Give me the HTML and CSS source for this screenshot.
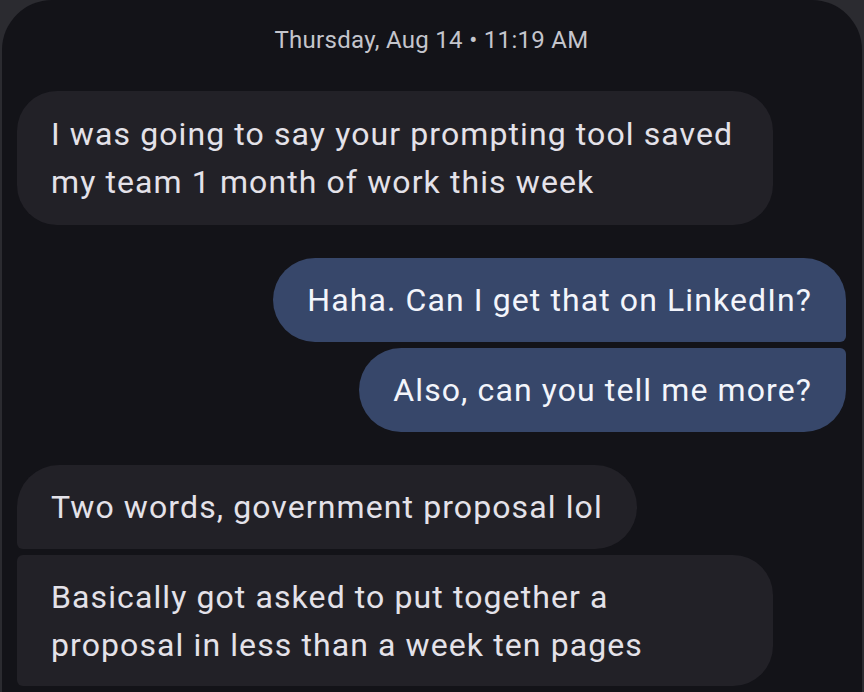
FILE: index.html
```html
<!DOCTYPE html>
<html lang="en">
<head>
<meta charset="utf-8">
<title>Messages</title>
<link rel="stylesheet" href="styles.css">
</head>
<body>
<div class="screen">
  <div class="timestamp">Thursday, Aug 14 • 11:19 AM</div>
  <div class="thread">
    <div class="group">
      <div class="bubble in multi">I was going to say your prompting tool saved my team 1 month of work this week</div>
    </div>
    <div class="group out-group">
      <div class="bubble out first">Haha. Can I get that on LinkedIn?</div>
      <div class="bubble out last">Also, can you tell me more?</div>
    </div>
    <div class="group">
      <div class="bubble in first">Two words, government proposal lol</div>
      <div class="bubble in mid multi">Basically got asked to put together a proposal in less than a week ten pages</div>
    </div>
  </div>
</div>
</body>
</html>
```

FILE: styles.css
```css
html, body {
  margin: 0;
  padding: 0;
  height: 100%;
}
body {
  background: #2b2b30;
  font-family: Roboto, "Noto Sans", sans-serif;
  overflow: hidden;
}
.screen {
  margin: 0 2px;
  height: 692px;
  background: #131318;
  border-radius: 50px 50px 0 0;
  box-sizing: border-box;
  padding: 26px 16px 0 15px;
  display: flex;
  flex-direction: column;
}
.timestamp {
  text-align: center;
  font-size: 24px;
  line-height: 28px;
  color: #c4c5cc;
  letter-spacing: 0.3px;
}
.thread {
  margin-top: 37px;
  display: flex;
  flex-direction: column;
  gap: 33px;
}
.group {
  display: flex;
  flex-direction: column;
  align-items: flex-start;
  gap: 6px;
}
.out-group {
  align-items: flex-end;
}
.bubble {
  box-sizing: border-box;
  max-width: 756px;
  padding: 18px 34px;
  font-size: 32px;
  line-height: 48px;
  letter-spacing: 1.1px;
  border-radius: 40px;
}
.multi {
  width: 756px;
  padding-top: 19px;
  padding-bottom: 19px;
}
.in {
  background: #222127;
  color: #e4e2e9;
}
.out {
  background: #37476a;
  color: #f3f5fb;
  border-radius: 42px;
}
.out.first {
  border-bottom-right-radius: 6px;
}
.out.last {
  border-top-right-radius: 6px;
}
.in.first {
  border-radius: 42px;
  border-bottom-left-radius: 6px;
}
.in.mid {
  padding-top: 18px;
  padding-bottom: 17px;
  border-top-left-radius: 6px;
  border-bottom-left-radius: 6px;
}
```
